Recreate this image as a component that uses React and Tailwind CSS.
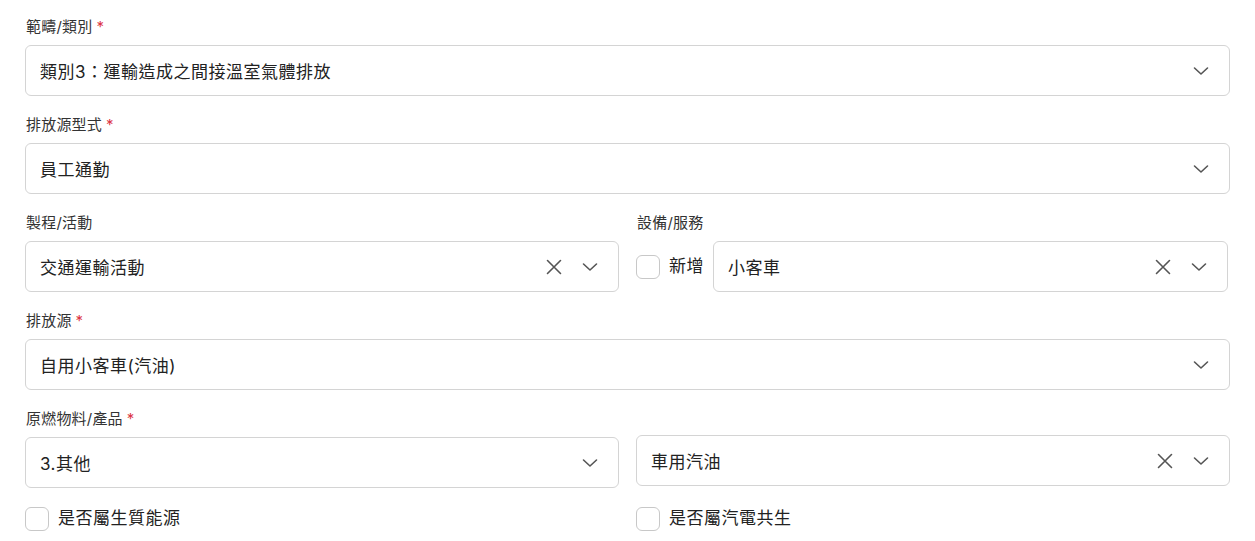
import React from "react";

const font = { fontFamily: 'Inter, "Noto Sans CJK TC", "Noto Sans", sans-serif' };

function Chevron() {
  return (
    <svg width="16" height="16" viewBox="0 0 16 16" fill="none" className="shrink-0">
      <path d="M1.5 5 L8 11 L14.5 5" stroke="#555" strokeWidth="1.6" strokeLinecap="round" strokeLinejoin="round" />
    </svg>
  );
}

function Clear() {
  return (
    <svg width="16" height="16" viewBox="0 0 16 16" fill="none" className="shrink-0">
      <path d="M1.5 1.5 L14.5 14.5 M14.5 1.5 L1.5 14.5" stroke="#555" strokeWidth="1.6" strokeLinecap="round" />
    </svg>
  );
}

function Select({ value, clearable, className = "" }) {
  return (
    <div className={"flex h-[51px] items-center rounded-[6px] border border-[#d4d4d4] bg-white pl-[14px] pr-[20px] " + className}>
      <span className="flex-1 truncate pt-[4px] text-[17px] tracking-[0.5px] text-[#222]">{value}</span>
      <div className="flex items-center gap-[20px]">
        {clearable && <Clear />}
        <Chevron />
      </div>
    </div>
  );
}

function Label({ children, required }) {
  return (
    <div className="mb-[9px] h-[20px] pl-[1px] pt-[1px] text-[15px] leading-[20px] tracking-[0.2px] text-[#333]">
      {children}
      {required && <span className="ml-[4px] text-[#dc3545]">*</span>}
    </div>
  );
}

function Checkbox({ label }) {
  return (
    <label className="flex items-center gap-[9px]">
      <span className="h-[24px] w-[24px] shrink-0 rounded-[6px] border-[1.5px] border-[#c8c8c8] bg-white" />
      <span className="text-[17px] tracking-[0.5px] text-[#222]">{label}</span>
    </label>
  );
}

export default function App() {
  return (
    <div className="min-h-[541px] w-[1255px] bg-white px-[25px] pt-[16px]" style={font}>
      <div className="mb-[18px]">
        <Label required>範疇/類別</Label>
        <Select value="類別3：運輸造成之間接溫室氣體排放" />
      </div>
      <div className="mb-[18px]">
        <Label required>排放源型式</Label>
        <Select value="員工通勤" />
      </div>
      <div className="mb-[18px] grid grid-cols-2 gap-[17px]">
        <div>
          <Label>製程/活動</Label>
          <Select value="交通運輸活動" clearable />
        </div>
        <div className="pr-[2px]">
          <Label>設備/服務</Label>
          <div className="flex items-center">
            <Checkbox label="新增" />
            <Select value="小客車" clearable className="ml-[9px] flex-1" />
          </div>
        </div>
      </div>
      <div className="mb-[18px]">
        <Label required>排放源</Label>
        <Select value="自用小客車(汽油)" />
      </div>
      <div className="mb-[18px] grid grid-cols-2 gap-[17px]">
        <div>
          <Label required>原燃物料/產品</Label>
          <Select value="3.其他" />
        </div>
        <div className="pt-[27px]">
          <Select value="車用汽油" clearable />
        </div>
      </div>
      <div className="grid grid-cols-2 gap-[17px]">
        <Checkbox label="是否屬生質能源" />
        <Checkbox label="是否屬汽電共生" />
      </div>
    </div>
  );
}
